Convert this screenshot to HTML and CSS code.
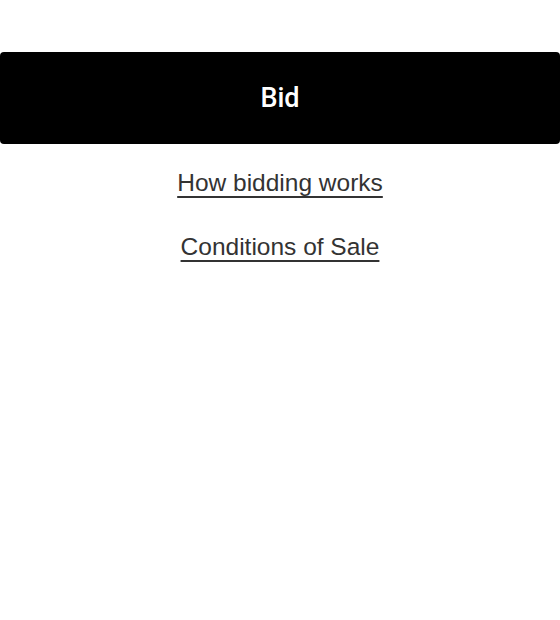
FILE: index.html
```html
<!DOCTYPE html>
<html lang="en">
<head>
<meta charset="utf-8">
<title>Bid</title>
<link rel="stylesheet" href="styles.css">
</head>
<body>
<main class="panel">
  <button class="bid-button" type="button">Bid</button>
  <nav class="links">
    <a class="link" href="#">How bidding works</a>
    <a class="link" href="#">Conditions of Sale</a>
  </nav>
</main>
</body>
</html>
```
FILE: styles.css
```css
html, body {
  margin: 0;
  padding: 0;
  background: #ffffff;
}
body {
  font-family: "Liberation Sans", Arial, sans-serif;
  color: #333333;
}
.panel {
  padding-top: 52px;
  display: flex;
  flex-direction: column;
}
.bid-button {
  display: block;
  width: 100%;
  height: 92px;
  border: 0;
  border-radius: 4px;
  background: #000000;
  color: #ffffff;
  font-family: Roboto, "Liberation Sans", Arial, sans-serif;
  font-weight: 500;
  font-size: 27px;
  padding: 0;
  cursor: pointer;
}
.links {
  display: flex;
  flex-direction: column;
  align-items: center;
  gap: 24px;
  padding-top: 19px;
}
.link {
  display: block;
  line-height: 40px;
  font-size: 24.5px;
  color: #333333;
  text-decoration: underline;
  text-decoration-thickness: 2px;
  text-underline-offset: 5px;
  text-decoration-skip-ink: none;
}
```
